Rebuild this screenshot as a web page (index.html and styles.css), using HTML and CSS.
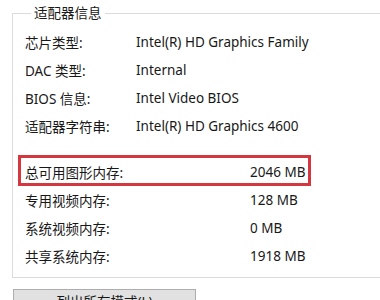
FILE: index.html
```html
<!DOCTYPE html>
<html lang="zh-CN">
<head>
<meta charset="utf-8">
<link rel="stylesheet" href="styles.css">
</head>
<body>
<fieldset class="group">
  <legend class="legend">适配器信息</legend>
  <div class="rows">
    <div class="row"><span class="lbl">芯片类型:</span><span class="val">Intel(R) HD Graphics Family</span></div>
    <div class="row"><span class="lbl">DAC 类型:</span><span class="val">Internal</span></div>
    <div class="row"><span class="lbl">BIOS 信息:</span><span class="val">Intel Video BIOS</span></div>
    <div class="row"><span class="lbl">适配器字符串:</span><span class="val">Intel(R) HD Graphics 4600</span></div>
  </div>
  <div class="rows mem">
    <div class="row hl"><span class="lbl">总可用图形内存:</span><span class="val">2046 MB</span></div>
    <div class="row"><span class="lbl">专用视频内存:</span><span class="val">128 MB</span></div>
    <div class="row"><span class="lbl">系统视频内存:</span><span class="val">0 MB</span></div>
    <div class="row"><span class="lbl">共享系统内存:</span><span class="val">1918 MB</span></div>
  </div>
</fieldset>
<div class="btnbar">
  <button class="btn">列出所有模式(L)</button>
</div>
</body>
</html>
```
FILE: styles.css
```css
html, body {
  margin: 0;
  padding: 0;
  background: #ffffff;
  overflow: hidden;
  width: 380px;
  height: 300px;
}
body {
  font-family: "Noto Sans", "Noto Sans CJK SC", sans-serif;
  font-size: 13.5px;
  color: #181818;
}
.group {
  box-sizing: border-box;
  margin: 4px 0 0 12px;
  width: 368px;
  min-width: 0;
  padding: 6px 0 7px 12px;
  border: 1px solid #dcdcdc;
  border-right: none;
}
.legend {
  margin-left: 6px;
  padding: 0 3px;
  line-height: 18px;
  height: 18px;
}
.rows {
  display: flex;
  flex-direction: column;
}
.row {
  display: flex;
  align-items: center;
  height: 28px;
  white-space: nowrap;
}
.lbl {
  width: 111px;
  flex: none;
}
.mem {
  margin-top: 15px;
}
.mem .lbl {
  width: 225px;
}
.hl {
  box-sizing: border-box;
  height: 31px;
  width: 293px;
  margin-left: -7px;
  padding: 2px 0 0 4px;
  border: 3px solid #d4383e;
}
.btnbar {
  padding: 11px 0 0 13px;
}
.btn {
  box-sizing: border-box;
  width: 183px;
  height: 24px;
  margin: 0;
  padding: 2px 0 0;
  background: #e1e1e1;
  border: 1px solid #adadad;
  border-radius: 0;
  font-family: "Noto Sans", "Noto Sans CJK SC", sans-serif;
  font-size: 13.5px;
  line-height: 18px;
  color: #181818;
  display: block;
}
```
